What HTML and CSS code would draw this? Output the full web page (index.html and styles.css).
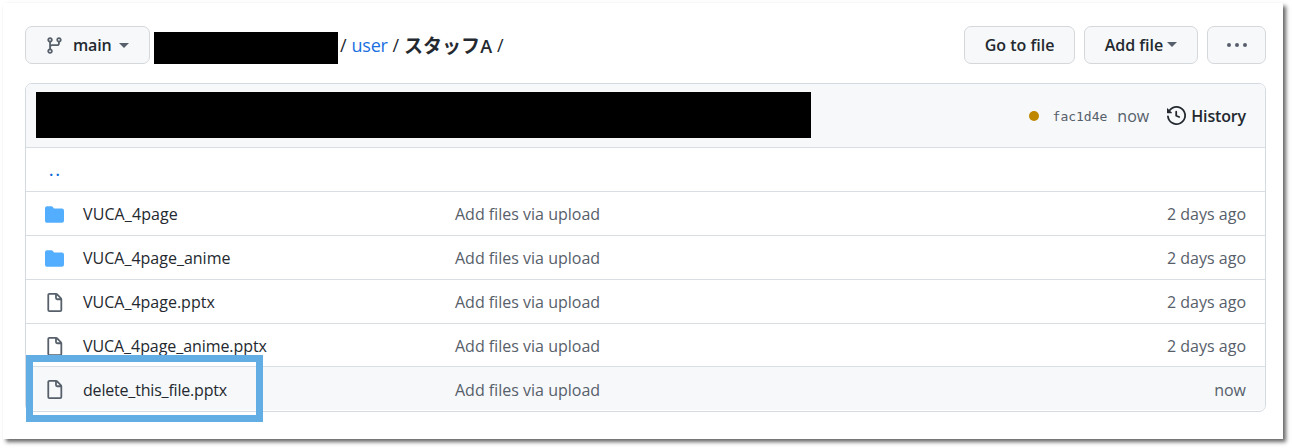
FILE: index.html
```html
<!DOCTYPE html>
<html lang="ja">
<head>
<meta charset="utf-8">
<title>user/スタッフA</title>
<link rel="stylesheet" href="styles.css">
</head>
<body>
<main class="paper">
  <header class="toolbar">
    <button class="btn branch">
      <svg width="19" height="19" viewBox="0 0 16 16"><path fill-rule="evenodd" d="M11.75 2.5a.75.75 0 100 1.5.75.75 0 000-1.5zm-2.25.75a2.25 2.25 0 113 2.122V6A2.5 2.5 0 0110 8.500H6a1 1 0 00-1 1v1.128a2.251 2.251 0 11-1.500 0V5.372a2.250 2.250 0 111.500 0v1.836A2.492 2.492 0 016 7h4a1 1 0 001-1v-.628A2.250 2.250 0 019.500 3.250zM4.250 12a.75.75 0 100 1.500.75.75 0 000-1.500zM3.500 3.250a.75.75 0 111.500 0 .75.75 0 01-1.500 0z"/></svg>
      <span class="branch-name">main</span><i class="caret"></i>
    </button>
    <span class="redacted repo"></span>
    <nav class="crumbs"><span>/</span><a class="link">user</a><span>/</span><strong><span class="kana">スタッフ</span>A</strong><span>/</span></nav>
    <div class="actions">
      <button class="btn goto"><span>Go to file</span></button>
      <button class="btn add"><span>Add file</span><i class="caret"></i></button>
      <button class="btn more"><i></i><i></i><i></i></button>
    </div>
  </header>
  <section class="box">
    <div class="commit">
      <span class="redacted message"></span>
      <i class="status"></i>
      <code class="sha">fac1d4e</code>
      <span class="when">now</span>
      <a class="history">
        <svg width="19" height="19" viewBox="0 0 16 16"><path fill-rule="evenodd" d="M1.643 3.143L.427 1.927A.25.25 0 000 2.104V5.750c0 .138.112.25.25.25h3.646a.25.25 0 00.177-.427L2.715 4.215a6.500 6.500 0 11-1.180 4.458.75.75 0 10-1.493.154 8.001 8.001 0 101.600-5.684zM7.750 4a.75.75 0 01.75.75v2.992l2.028.812a.75.75 0 01-.557 1.392l-2.500-1A.75.75 0 017 8.250v-3.500A.75.75 0 017.750 4z"/></svg>
        <span>History</span>
      </a>
    </div>
    <div class="row parent"><a class="up">..</a></div>
    <div class="row"><svg class="folder" width="19" height="19" viewBox="0 0 16 16"><path d="M1.750 1A1.750 1.750 0 000 2.750v10.500C0 14.216.784 15 1.750 15h12.500A1.750 1.750 0 0016 13.250v-8.500A1.750 1.750 0 0014.250 3h-6.500a.25.25 0 01-.2-.1l-.9-1.200c-.33-.44-.85-.7-1.400-.7h-3.500z"/></svg><span class="name n1">VUCA_4page</span><span class="msg">Add files via upload</span><span class="age">2 days ago</span></div>
    <div class="row"><svg class="folder" width="19" height="19" viewBox="0 0 16 16"><path d="M1.750 1A1.750 1.750 0 000 2.750v10.500C0 14.216.784 15 1.750 15h12.500A1.750 1.750 0 0016 13.250v-8.500A1.750 1.750 0 0014.250 3h-6.500a.25.25 0 01-.2-.1l-.9-1.200c-.33-.44-.85-.7-1.400-.7h-3.500z"/></svg><span class="name n2">VUCA_4page_anime</span><span class="msg">Add files via upload</span><span class="age">2 days ago</span></div>
    <div class="row"><svg class="file" width="19" height="19" viewBox="0 0 16 16"><path fill-rule="evenodd" d="M3.750 1.500a.25.25 0 00-.25.25v12.500c0 .138.112.25.25.25h9a.25.25 0 00.25-.25V6h-2.750A1.750 1.750 0 018.500 4.250V1.500H3.750zm6.250.56v2.190c0 .138.112.25.25.25h2.190L10 2.060zM2 1.750C2 .784 2.784 0 3.750 0h5.586c.464 0 .909.184 1.237.513l3.414 3.414c.329.328.513.773.513 1.237v9.086A1.750 1.750 0 0112.750 16h-9A1.750 1.750 0 012 14.250V1.750z"/></svg><span class="name n3">VUCA_4page.pptx</span><span class="msg">Add files via upload</span><span class="age">2 days ago</span></div>
    <div class="row"><svg class="file" width="19" height="19" viewBox="0 0 16 16"><path fill-rule="evenodd" d="M3.750 1.500a.25.25 0 00-.25.25v12.500c0 .138.112.25.25.25h9a.25.25 0 00.25-.25V6h-2.750A1.750 1.750 0 018.500 4.250V1.500H3.750zm6.250.56v2.190c0 .138.112.25.25.25h2.190L10 2.060zM2 1.750C2 .784 2.784 0 3.750 0h5.586c.464 0 .909.184 1.237.513l3.414 3.414c.329.328.513.773.513 1.237v9.086A1.750 1.750 0 0112.750 16h-9A1.750 1.750 0 012 14.250V1.750z"/></svg><span class="name n4">VUCA_4page_anime.pptx</span><span class="msg">Add files via upload</span><span class="age">2 days ago</span></div>
    <div class="row selected"><svg class="file" width="19" height="19" viewBox="0 0 16 16"><path fill-rule="evenodd" d="M3.750 1.500a.25.25 0 00-.25.25v12.500c0 .138.112.25.25.25h9a.25.25 0 00.25-.25V6h-2.750A1.750 1.750 0 018.500 4.250V1.500H3.750zm6.250.56v2.190c0 .138.112.25.25.25h2.190L10 2.060zM2 1.750C2 .784 2.784 0 3.750 0h5.586c.464 0 .909.184 1.237.513l3.414 3.414c.329.328.513.773.513 1.237v9.086A1.750 1.750 0 0112.750 16h-9A1.750 1.750 0 012 14.250V1.750z"/></svg><span class="name n5">delete_this_file.pptx</span><span class="msg">Add files via upload</span><span class="age">now</span><i class="highlight"></i></div>
  </section>
</main>
</body>
</html>
```

FILE: styles.css
```css
* { box-sizing: border-box; }
body {
  margin: 0;
  height: 448px;
  padding: 3px 9px 9px 3px;
  overflow: hidden;
  background: #fff;
  color: #24292f;
  font: 16px/24px "Open Sans", "Noto Sans", "Noto Sans CJK JP", sans-serif;
}
svg { display: block; flex: none; fill: #57606a; }
.paper {
  height: 436px;
  padding: 23px 17px 0 22px;
  background: #fff;
  box-shadow: 3px 3px 4px rgba(0, 0, 0, .6);
}
.toolbar { display: flex; height: 38px; align-items: center; }
.btn {
  display: flex;
  height: 38px;
  padding: 0;
  align-items: center;
  justify-content: center;
  border: 1px solid #d5d8da;
  border-radius: 7px;
  background: #f6f8fa;
  color: #24292f;
  font: 600 16px/24px "Open Sans", "Noto Sans", sans-serif;
  white-space: nowrap;
}
.branch { width: 125px; justify-content: flex-start; padding-left: 19px; }
.branch-name { margin: 0 8px 0 9px; letter-spacing: -.2px; }
.caret { border: 5px solid transparent; border-top-color: #57606a; border-bottom: 0; }
.redacted { display: block; flex: none; background: #000; }
.repo { width: 184px; height: 32px; margin: 6px 2px 0 4px; }
.crumbs { display: flex; gap: 5px; font-size: 18px; white-space: nowrap; }
.crumbs .link { letter-spacing: -.3px; }
.crumbs strong { font-weight: 600; }
.kana { font-family: "Noto Sans CJK JP", sans-serif; font-weight: 700; font-size: 19px; }
.link { color: #1a6fe0; }
.actions { display: flex; gap: 9px; margin-left: auto; }
.goto { width: 111px; }
.add { width: 114px; gap: 4px; }
.add .caret { margin-top: -2px; }
.more { width: 59px; gap: 4px; }
.more i { width: 4px; height: 4px; border-radius: 50%; background: #57606a; }
.box {
  height: 329px;
  margin-top: 19px;
  border: 1px solid #d3dae1;
  border-radius: 7px;
}
.commit {
  display: flex;
  height: 63px;
  align-items: center;
  padding: 0 19px 0 10px;
  border-radius: 6px 6px 0 0;
  background: #f6f8fa;
  color: #57606a;
}
.message { width: 775px; height: 46px; margin: -1px auto 0 0; }
.status { width: 10px; height: 10px; border-radius: 50%; background: #bf8700; }
.sha { margin: 2px 10px 0 14px; font: 13px/20px "DejaVu Sans Mono", monospace; }
.when { margin-top: 1px; }
.history { display: flex; gap: 5px; margin: 1px 0 0 18px; color: #24292f; font-weight: 600; letter-spacing: -.15px; }
.history svg { margin-top: 2px; fill: #24292f; }
.row {
  position: relative;
  display: grid;
  height: 43.9px;
  grid-template-columns: 19px 353px 1fr auto;
  column-gap: 19px;
  align-items: center;
  padding: 2px 19px 0 19px;
  border-top: 1px solid #d8dee4;
  white-space: nowrap;
}
.name, .msg, .age { justify-self: start; }
.n1 { letter-spacing: .1px; }
.n4 { letter-spacing: -.07px; }
.n5 { letter-spacing: -.19px; }
.up { padding-left: 4px; color: #0969da; font-weight: 600; letter-spacing: 2px; }
.folder { fill: #54aeff; }
.msg, .age { color: #57606a; }
.selected { background: #f6f8fa; border-radius: 0 0 6px 6px; }
.highlight {
  position: absolute;
  top: -12px;
  left: 0;
  width: 237px;
  height: 67px;
  border: 7px solid #61ade4;
}
```
